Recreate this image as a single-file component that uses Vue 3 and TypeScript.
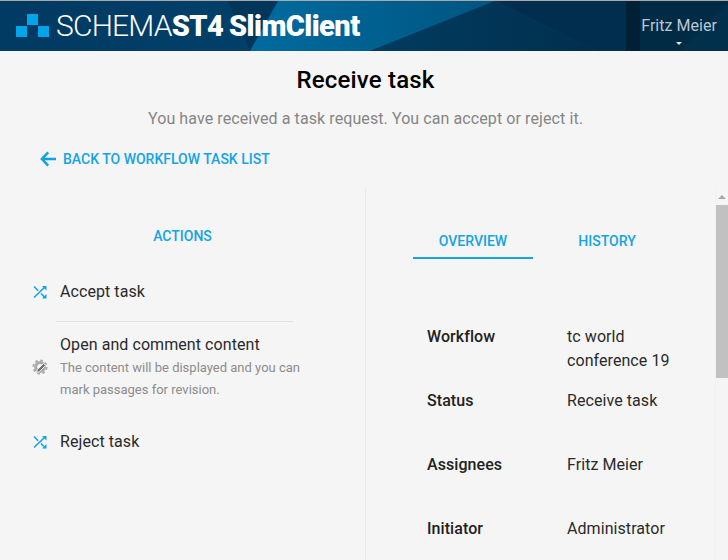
<script setup lang="ts">
interface Row { label: string; value: string[] }
const rows: Row[] = [
  { label: 'Workflow', value: ['tc world', 'conference 19'] },
  { label: 'Status', value: ['Receive task'] },
  { label: 'Assignees', value: ['Fritz Meier'] },
  { label: 'Initiator', value: ['Administrator'] },
]
</script>

<template>
  <div class="page">
    <header class="topbar">
      <svg class="topbg" viewBox="0 0 728 50" preserveAspectRatio="none" aria-hidden="true">
        <defs>
          <linearGradient id="bgA" x1="0" x2="1" y1="0" y2="0">
            <stop offset="0" stop-color="#013a62" />
            <stop offset="1" stop-color="#024a78" />
          </linearGradient>
          <linearGradient id="bgB" x1="0" x2="1" y1="0" y2="0">
            <stop offset="0" stop-color="#006b9f" />
            <stop offset="1" stop-color="#005581" />
          </linearGradient>
          <linearGradient id="bgC" x1="0" x2="1" y1="0" y2="0">
            <stop offset="0" stop-color="#013c60" />
            <stop offset="1" stop-color="#012f4e" />
          </linearGradient>
        </defs>
        <rect width="728" height="50" fill="url(#bgA)" />
        <polygon points="228,0 278,0 255,50 250,50" fill="#01365a" />
        <polygon points="278,0 495,0 370,50 250,50" fill="url(#bgB)" />
        <polygon points="495,0 626,0 626,50 597,50" fill="#012e4e" />
        <polygon points="495,0 597,50 370,50" fill="url(#bgC)" />
        <polygon points="626,0 728,0 728,50 626,50" fill="#012a44" />
        <polygon points="626,0 640,0 640,50 626,50" fill="#011f35" />
        <polygon points="728,0 728,2 680,50 728,50" fill="#01304c" />
      </svg>
      <div class="brand">
        <svg class="mark" width="34" height="24" viewBox="0 0 34 24" aria-hidden="true">
          <rect x="0" y="12" width="11" height="11" fill="#00a4e8" />
          <rect x="11" y="0" width="11" height="11" fill="#00a4e8" />
          <rect x="22" y="12" width="11" height="11" fill="#00a4e8" />
        </svg>
        <span class="schema">SCHEMA</span>
        <span class="product">ST4 SlimClient</span>
      </div>
      <div class="user">
        <span class="user-name">Fritz Meier</span>
        <span class="caret"></span>
      </div>
    </header>

    <section class="intro">
      <h1 class="title">Receive task</h1>
      <p class="subtitle">You have received a task request. You can accept or reject it.</p>
      <a class="back">
        <svg width="16" height="16" viewBox="0 0 16 16" aria-hidden="true">
          <path d="M8.2 1.4 1.9 8l6.3 6.6M2.4 8H16" fill="none" stroke="#0fa3e6" stroke-width="2.5" />
        </svg>
        <span>BACK TO WORKFLOW TASK LIST</span>
      </a>
    </section>

    <main class="columns">
      <aside class="left">
        <h2 class="actions-title">ACTIONS</h2>
        <ul class="actions">
          <li class="action action-first">
            <svg class="icon" width="16" height="16" viewBox="0 0 16 16" aria-hidden="true">
              <g fill="none" stroke="#15a3e6" stroke-width="1.6">
                <path d="M2 2.5 6.2 6.7M9 9.5 13 13.5M2 13.5 13 3" />
              </g>
              <path d="M10 2h4.5v4.5zM10 14.5h4.5V10z" fill="#15a3e6" />
            </svg>
            <span class="action-name">Accept task</span>
          </li>
          <li class="action action-second">
            <svg class="icon" width="16" height="16" viewBox="0 0 16 16" aria-hidden="true">
              <circle cx="8" cy="8" r="4.4" fill="none" stroke="#ababab" stroke-width="3" />
              <circle cx="8" cy="8" r="6.6" fill="none" stroke="#ababab" stroke-width="2" stroke-dasharray="2.6 2.6" />
              <path d="M4.6 13.4 5.3 10.7 11.6 4.4 13.6 6.4 7.3 12.7z" fill="#707070" stroke="#f5f5f5" stroke-width=".9" />
            </svg>
            <div class="action-text">
              <span class="action-name">Open and comment content</span>
              <span class="action-desc">The content will be displayed and you can mark passages for revision.</span>
            </div>
          </li>
          <li class="action action-third">
            <svg class="icon" width="16" height="16" viewBox="0 0 16 16" aria-hidden="true">
              <g fill="none" stroke="#15a3e6" stroke-width="1.6">
                <path d="M2 2.5 6.2 6.7M9 9.5 13 13.5M2 13.5 13 3" />
              </g>
              <path d="M10 2h4.5v4.5zM10 14.5h4.5V10z" fill="#15a3e6" />
            </svg>
            <span class="action-name">Reject task</span>
          </li>
        </ul>
      </aside>

      <section class="right">
        <div class="content">
          <nav class="tabs">
            <div class="tab tab-active">OVERVIEW</div>
            <div class="tab">HISTORY</div>
          </nav>
          <dl class="details">
            <div v-for="row in rows" :key="row.label" class="detail">
              <dt>{{ row.label }}</dt>
              <dd>
                <span v-for="line in row.value" :key="line" class="line">{{ line }}</span>
              </dd>
            </div>
          </dl>
        </div>
        <div class="scrollbar" aria-hidden="true">
          <div class="arrow"></div>
          <div class="thumb"></div>
        </div>
      </section>
    </main>
  </div>
</template>

<style scoped>
.page {
  width: 728px;
  height: 560px;
  overflow: hidden;
  background: #f5f5f5;
  font-family: Roboto, "Liberation Sans", sans-serif;
  color: #212121;
  display: flex;
  flex-direction: column;
}
.topbar {
  position: relative;
  flex: none;
  height: 50px;
  border-top: 1px solid #a9a9a9;
  display: flex;
  align-items: stretch;
  justify-content: space-between;
  overflow: hidden;
}
.topbg {
  position: absolute;
  inset: 0;
  width: 100%;
  height: 100%;
}
.brand {
  position: relative;
  display: flex;
  align-items: center;
  padding-left: 16px;
  padding-bottom: 1px;
  color: #fff;
  white-space: nowrap;
}
.mark {
  margin-right: 6px;
}
.schema {
  font-size: 30px;
  font-weight: 300;
  letter-spacing: -.8px;
}
.product {
  font-size: 29px;
  font-weight: 900;
  letter-spacing: -.56px;
  word-spacing: -1px;
}
.user {
  position: relative;
  display: flex;
  flex-direction: column;
  align-items: center;
  padding: 15px 11px 0 0;
}
.user-name {
  font-size: 16px;
  line-height: 20px;
  letter-spacing: .04px;
  color: #b9c9d3;
}
.caret {
  width: 0;
  height: 0;
  margin-top: 6px;
  border-left: 3px solid transparent;
  border-right: 3px solid transparent;
  border-top: 3px solid #e6e6e6;
}
.intro {
  flex: none;
  height: 137px;
  box-sizing: border-box;
  padding-top: 15px;
  position: relative;
}
.title {
  margin: 0;
  padding-left: 3px;
  font-size: 24px;
  line-height: 28px;
  font-weight: 500;
  letter-spacing: .18px;
  color: #000;
  text-align: center;
}
.subtitle {
  margin: 15px 0 0;
  padding-left: 3px;
  font-size: 16px;
  line-height: 20px;
  letter-spacing: .09px;
  color: #858585;
  text-align: center;
}
.back {
  display: flex;
  align-items: center;
  gap: 7px;
  margin: 20px 0 0 40px;
  font-size: 14px;
  line-height: 20px;
  font-weight: 500;
  color: #13a3e6;
}
.columns {
  flex: 1;
  display: flex;
  min-height: 0;
}
.left {
  flex: none;
  width: 366px;
  box-sizing: border-box;
  border-right: 1px solid #e9e9e9;
}
.actions-title {
  margin: 40px 0 0;
  font-size: 14px;
  line-height: 17px;
  font-weight: 500;
  color: #13a3e6;
  text-align: center;
}
.actions {
  list-style: none;
  margin: 0;
  padding: 0;
}
.action {
  display: flex;
  align-items: center;
  padding-left: 32px;
  gap: 12px;
}
.action-first {
  margin-top: 32px;
  height: 30px;
  position: relative;
}
.action-first::after {
  content: "";
  position: absolute;
  left: 56px;
  width: 237px;
  bottom: -15px;
  height: 1px;
  background: #e2e2e2;
}
.action-second {
  margin-top: 26px;
}
.action-third {
  margin-top: 26px;
  height: 30px;
}
.icon {
  flex: none;
}
.action-name {
  font-size: 16px;
  line-height: 24px;
  letter-spacing: .07px;
  color: #2a2a2a;
}
.action-text {
  display: flex;
  flex-direction: column;
  width: 250px;
}
.action-desc {
  font-size: 13px;
  line-height: 22px;
  color: #8c8c8c;
}
.right {
  flex: 1;
  display: flex;
  min-width: 0;
}
.content {
  flex: 1;
  min-width: 0;
  padding: 34px 0 0 47px;
}
.tabs {
  display: flex;
  height: 37px;
}
.tab {
  width: 120px;
  box-sizing: border-box;
  text-align: center;
  font-size: 14px;
  line-height: 38px;
  font-weight: 500;
  color: #13a3e6;
  margin-right: 28px;
}
.tab-active {
  border-bottom: 2px solid #13a3e6;
}
.tab:not(.tab-active) {
  width: 92px;
}
.details {
  margin: 66px 0 0 14px;
}
.detail {
  display: flex;
  min-height: 40px;
  margin-bottom: 24px;
  font-size: 16px;
  line-height: 24px;
  letter-spacing: .07px;
}
.detail:first-child {
  margin-bottom: 16px;
}
.detail dt {
  width: 140px;
  font-weight: 500;
  color: #212121;
}
.detail dd {
  margin: 0;
  color: #2a2a2a;
}
.line {
  display: block;
}
.scrollbar {
  flex: none;
  width: 12px;
  background: #f5f5f5;
  display: flex;
  flex-direction: column;
  align-items: center;
  border-left: 1px solid #f1f1f1;
  box-sizing: content-box;
}
.arrow {
  margin-top: 7px;
  width: 0;
  height: 0;
  border-left: 4px solid transparent;
  border-right: 4px solid transparent;
  border-bottom: 4px solid #a8a8a8;
}
.thumb {
  margin-top: 6px;
  width: 100%;
  height: 173px;
  background: #c1c1c1;
}
</style>
